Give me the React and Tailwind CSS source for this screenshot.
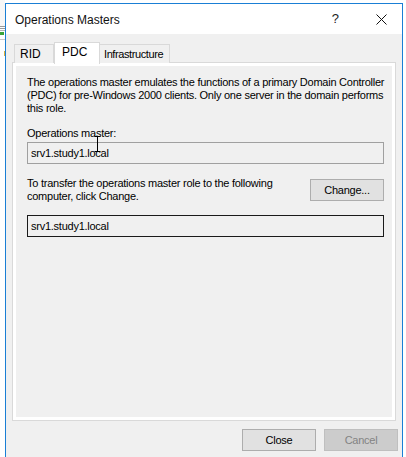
import React from 'react'

function TextBox({ value, dark }) {
  return (
    <div
      className={`h-[22px] w-[357px] border bg-[#f0f0f0] pl-[3px] flex items-center ${
        dark ? 'border-[#1a1a1a]' : 'border-[#a0a0a0]'
      }`}
    >
      {value}
    </div>
  )
}

export default function App() {
  return (
    <div className="relative w-[406px] h-[457px] overflow-hidden bg-white flex font-['Liberation_Sans',Arial,sans-serif] text-black">
      {/* window behind, left edge */}
      <div className="w-[5px] flex flex-col bg-white">
        <div className="h-[26px] bg-[#f7f7f7]" />
        <div className="h-px bg-[#9a9a9a]" />
        <div className="h-px mt-px bg-[#9a9a9a]" />
        <div className="h-px mt-px bg-[#b5b5b5]" />
        <div className="h-[3px] w-[4px] mt-px bg-[#3aa33a]" />
        <div className="h-px mt-[4px] bg-[#c8c8c8]" />
        <div className="h-[5px] w-[3px] mt-[11px] ml-[2px] border-r border-[#d8b040]" />
      </div>

      {/* dialog */}
      <div className="mt-[3px] w-[398px] border-x border-t border-[#1a7fd5] flex flex-col bg-[#f0f0f0]">
        {/* title bar */}
        <div className="h-[30px] bg-white flex items-center pl-[9px]">
          <span className="text-[12px] text-[#111] mt-[1px]">Operations Masters</span>
          <span className="ml-auto text-[13px] text-[#222] mr-[37px]">?</span>
          <svg className="mr-[15px]" width="11" height="11" viewBox="0 0 11 11">
            <path d="M0.5 0.5 L10.5 10.5 M10.5 0.5 L0.5 10.5" stroke="#111" strokeWidth="1" />
          </svg>
        </div>

        {/* body */}
        <div className="flex-1 px-[6px] pt-[8px] text-[11px] leading-[13px] tracking-[-0.25px]">
          {/* tabs */}
          <div className="flex items-end h-[21px] pl-[2px]">
            <div className="w-[40px] h-[19px] border border-b-0 border-[#d9d9d9] bg-[#f0f0f0] pl-[5px] pt-[3px] text-[12px] tracking-normal">
              RID
            </div>
            <div className="relative z-10 w-[46px] h-[22px] -mb-px border border-b-0 border-[#d9d9d9] bg-white pl-[7px] pt-[3px] text-[12px] tracking-normal">
              PDC
            </div>
            <div className="w-[70px] h-[19px] border border-b-0 border-l-0 border-[#d9d9d9] bg-[#f0f0f0] pl-[4px] pt-[3px] text-[11px] tracking-[-0.4px] whitespace-nowrap overflow-hidden">
              Infrastructure
            </div>
          </div>

          {/* tab page */}
          <div className="-mt-px w-[384px] h-[359px] border border-[#d9d9d9] bg-white p-[3px]">
            <div className="h-full bg-[#f0f0f0] pl-[11px] pt-[10px]">
              <p className="w-[362px]">
                The operations master emulates the functions of a primary Domain Controller
                (PDC) for pre-Windows 2000 clients. Only one server in the domain performs
                this role.
              </p>

              <div className="mt-[12px]">Operations master:</div>
              <div className="mt-[2px]">
                <TextBox value="srv1.study1.local" />
              </div>

              <div className="mt-[13px] flex w-[357px]">
                <div className="w-[270px]">
                  To transfer the operations master role to the following computer, click
                  Change.
                </div>
                <button className="ml-auto mt-[2px] w-[74px] h-[22px] border border-[#adadad] bg-[#e1e1e1] text-[11px]">
                  Change...
                </button>
              </div>

              <div className="mt-[12px]">
                <TextBox value="srv1.study1.local" dark />
              </div>
            </div>
          </div>

          {/* dialog buttons */}
          <div className="mt-[8px] -mr-[2px] flex justify-end gap-[8px]">
            <button className="w-[74px] h-[22px] border border-[#adadad] bg-[#e1e1e1] text-[11px]">
              Close
            </button>
            <button className="w-[74px] h-[22px] border border-[#bfbfbf] bg-[#cccccc] text-[11px] text-[#838383]">
              Cancel
            </button>
          </div>
        </div>
      </div>

      {/* I-beam mouse cursor */}
      <svg className="absolute left-[94px] top-[136px]" width="7" height="16" viewBox="0 0 7 16">
        <path d="M0.5 0.5 H6.5 M3.5 0.5 V15.5 M0.5 15.5 H6.5" stroke="#000" strokeWidth="1" fill="none" />
      </svg>
    </div>
  )
}
